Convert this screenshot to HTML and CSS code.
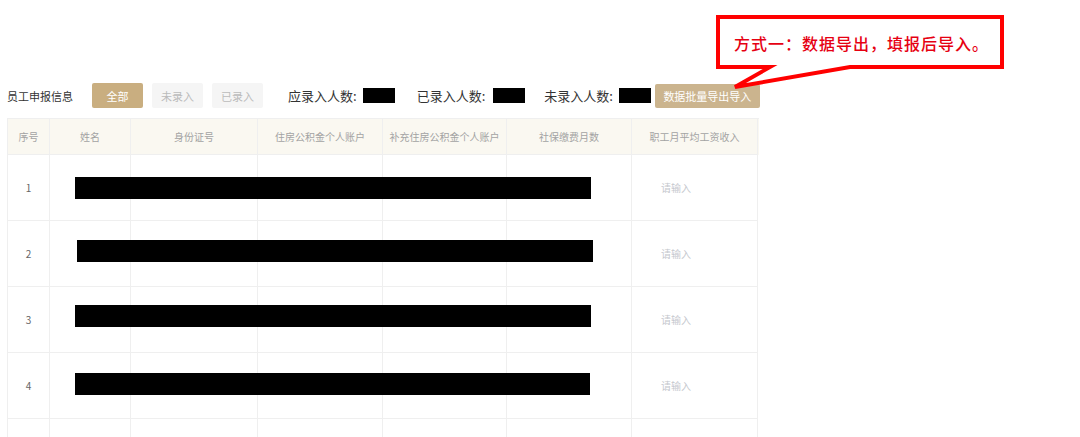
FILE: index.html
```html
<!DOCTYPE html>
<html lang="zh-CN">

<head>
    <meta charset="UTF-8">
    <meta name="viewport" content="width=device-width, initial-scale=1.0">
    <link rel="stylesheet" href="styles.css">
    <title>员工申报信息</title>
</head>

<body>
    <div class="page">
        <div class="toolbar">
            <span class="title">员工申报信息</span>
            <div class="btn-group">
                <button class="tab tab-active">全部</button>
                <button class="tab">未录入</button>
                <button class="tab">已录入</button>
            </div>
            <span class="count">应录入人数:</span>
            <span class="mask"></span>
            <span class="count">已录入人数:</span>
            <span class="mask"></span>
            <span class="count">未录入人数:</span>
            <span class="mask"></span>
            <button class="export-btn">数据批量导出导入</button>
        </div>

        <div class="table">
            <div class="row head-row">
                <div class="cell">序号</div>
                <div class="cell">姓名</div>
                <div class="cell">身份证号</div>
                <div class="cell">住房公积金个人账户</div>
                <div class="cell">补充住房公积金个人账户</div>
                <div class="cell">社保缴费月数</div>
                <div class="cell">职工月平均工资收入</div>
            </div>
            <div class="row">
                <div class="cell num">1</div>
                <div class="cell"></div>
                <div class="cell"></div>
                <div class="cell"></div>
                <div class="cell"></div>
                <div class="cell"></div>
                <div class="cell input-cell"><span class="placeholder">请输入</span></div>
                <div class="redact redact-1"></div>
            </div>
            <div class="row">
                <div class="cell num">2</div>
                <div class="cell"></div>
                <div class="cell"></div>
                <div class="cell"></div>
                <div class="cell"></div>
                <div class="cell"></div>
                <div class="cell input-cell"><span class="placeholder">请输入</span></div>
                <div class="redact redact-2"></div>
            </div>
            <div class="row">
                <div class="cell num">3</div>
                <div class="cell"></div>
                <div class="cell"></div>
                <div class="cell"></div>
                <div class="cell"></div>
                <div class="cell"></div>
                <div class="cell input-cell"><span class="placeholder">请输入</span></div>
                <div class="redact redact-3"></div>
            </div>
            <div class="row">
                <div class="cell num">4</div>
                <div class="cell"></div>
                <div class="cell"></div>
                <div class="cell"></div>
                <div class="cell"></div>
                <div class="cell"></div>
                <div class="cell input-cell"><span class="placeholder">请输入</span></div>
                <div class="redact redact-4"></div>
            </div>
            <!-- next row only peeks in at the bottom edge -->
            <div class="row">
                <div class="cell"></div>
                <div class="cell"></div>
                <div class="cell"></div>
                <div class="cell"></div>
                <div class="cell"></div>
                <div class="cell"></div>
                <div class="cell"></div>
            </div>
        </div>

        <!-- annotation callout drawn over the page -->
        <div class="callout">
            <svg class="callout-shape" width="300" height="90" viewBox="716 15 300 90">
                <path d="M718,17 H1002 V67 H850 L735,87 L770,67 H718 Z"
                    fill="#fff" stroke="#f00" stroke-width="4" stroke-linejoin="miter" />
            </svg>
            <span class="callout-text">方式一：数据导出，填报后导入。</span>
        </div>
    </div>
</body>

</html>
```

FILE: styles.css
```css
body {
    margin: 0;
    font-family: "Noto Sans CJK SC", "Noto Sans", sans-serif;
    background: #fff;
    color: #333;
}

.page {
    position: relative;
    padding: 83px 0 0 7px;
    height: 437px;
    box-sizing: border-box;
    overflow: hidden;
}

.toolbar {
    display: flex;
    align-items: center;
    height: 25px;
}

.title {
    font-size: 11px;
    color: #333;
    width: 67px;
}

.btn-group {
    display: flex;
    gap: 9px;
    margin-left: 18px;
}

.tab {
    width: 51px;
    height: 25px;
    border: none;
    border-radius: 2px;
    background: #f5f5f5;
    color: #bbb;
    font-family: inherit;
    font-size: 11px;
    padding: 0;
}

.tab-active {
    background: #c9ae80;
    color: #fff;
}

.count {
    font-size: 13px;
    color: #333;
    margin-left: 25px;
    margin-right: 6px;
    white-space: nowrap;
}

.count + .mask + .count {
    margin-left: 22px;
    margin-right: 8px;
}

.count + .mask + .count + .mask + .count {
    margin-left: 19px;
    margin-right: 6px;
}

.mask {
    display: inline-block;
    width: 32px;
    height: 15px;
    background: #000;
}

.export-btn {
    margin-left: 4px;
    width: 105px;
    height: 24px;
    border: none;
    border-radius: 2px;
    background: #cbb48e;
    color: #fff;
    font-family: inherit;
    font-size: 11px;
    padding: 0;
    white-space: nowrap;
}

.table {
    margin-top: 10px;
    width: 751px;
    border-left: 1px solid #efefef;
    border-top: 1px solid #efefef;
}

.row {
    position: relative;
    display: grid;
    grid-template-columns: 42px 81px 127px 125px 124px 125px 126px;
    height: 66px;
}

.head-row {
    height: 36px;
    background: #faf8f1;
}

.cell {
    box-sizing: border-box;
    border-right: 1px solid #efefef;
    border-bottom: 1px solid #efefef;
    display: flex;
    align-items: center;
    justify-content: center;
    font-size: 10px;
    color: #a3a3a3;
    white-space: nowrap;
}

.num {
    color: #666;
}

.input-cell {
    justify-content: flex-start;
    padding-left: 29px;
}

.placeholder {
    color: #c5c8ce;
    font-size: 10px;
}

.redact {
    position: absolute;
    left: 67px;
    top: 22px;
    width: 516px;
    height: 22px;
    background: #000;
}

.redact-1 { top: 22px; }
.redact-2 { top: 19px; left: 69px; }
.redact-3 { top: 18px; }
.redact-4 { top: 20px; width: 515px; }

.callout {
    position: absolute;
    left: 716px;
    top: 15px;
    width: 300px;
    height: 90px;
}

.callout-shape {
    display: block;
}

.callout-text {
    position: absolute;
    left: 18px;
    top: 16px;
    font-size: 16px;
    font-weight: 500;
    color: #e60012;
    white-space: nowrap;
    letter-spacing: 1px;
}
```
